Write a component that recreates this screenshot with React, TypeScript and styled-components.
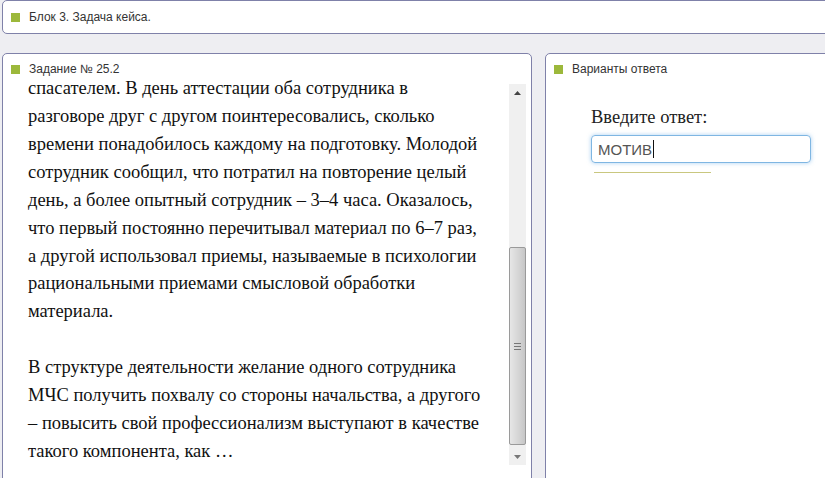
import { createGlobalStyle } from 'styled-components'
import styled from 'styled-components'

const GlobalStyle = createGlobalStyle`
  html, body {
    margin: 0;
    padding: 0;
    background: #eeeef2;
    overflow: hidden;
  }
`

const lines = [
  'спасателем. В день аттестации оба сотрудника в',
  'разговоре друг с другом поинтересовались, сколько',
  'времени понадобилось каждому на подготовку. Молодой',
  'сотрудник сообщил, что потратил на повторение целый',
  'день, а более опытный сотрудник – 3–4 часа. Оказалось,',
  'что первый постоянно перечитывал материал по 6–7 раз,',
  'а другой использовал приемы, называемые в психологии',
  'рациональными приемами смысловой обработки',
  'материала.',
  '',
  'В структуре деятельности желание одного сотрудника',
  'МЧС получить похвалу со стороны начальства, а другого',
  '– повысить свой профессионализм выступают в качестве',
  'такого компонента, как …'
]

const App = () => {
  return (
    <Page>
      <GlobalStyle />
      <TopPanel>
        <PanelTitle>
          <Marker />
          Блок 3. Задача кейса.
        </PanelTitle>
      </TopPanel>
      <Columns>
        <TaskPanel>
          <PanelTitle>
            <Marker />
            Задание № 25.2
          </PanelTitle>
          <TaskBody>
            <TaskText>
              {lines.map((line, i) => (
                <Line key={i}>{line || '\u00a0'}</Line>
              ))}
            </TaskText>
            <Scrollbar>
              <ScrollArrow>
                <svg width="7" height="4" viewBox="0 0 7 4">
                  <path d="M0 4 L3.5 0 L7 4 Z" fill="#444" />
                </svg>
              </ScrollArrow>
              <ScrollTrack>
                <ScrollThumb>
                  <Grip>
                    <span />
                    <span />
                    <span />
                  </Grip>
                </ScrollThumb>
              </ScrollTrack>
              <ScrollArrow>
                <svg width="7" height="4" viewBox="0 0 7 4">
                  <path d="M0 0 L7 0 L3.5 4 Z" fill="#777" />
                </svg>
              </ScrollArrow>
            </Scrollbar>
          </TaskBody>
        </TaskPanel>
        <AnswerPanel>
          <PanelTitle>
            <Marker />
            Варианты ответа
          </PanelTitle>
          <AnswerBody>
            <AnswerLabel>Введите ответ:</AnswerLabel>
            <AnswerInput>
              МОТИВ
              <Caret />
            </AnswerInput>
            <Underline />
          </AnswerBody>
        </AnswerPanel>
      </Columns>
    </Page>
  )
}

const Page = styled.div`
  width: 825px;
  height: 478px;
  overflow: hidden;
  padding-left: 2px;
  box-sizing: border-box;
  font-family: 'Liberation Sans', Arial, sans-serif;
`

const Panel = styled.div`
  background: #fff;
  border: 1px solid #7f81a9;
  border-radius: 5px;
  box-sizing: border-box;
`

const TopPanel = styled(Panel)`
  width: 840px;
  height: 34px;
  padding-top: 10px;
`

const Columns = styled.div`
  display: flex;
  gap: 13px;
  margin-top: 19px;
`

const TaskPanel = styled(Panel)`
  width: 530px;
  height: 440px;
  padding-top: 9px;
  flex-shrink: 0;
`

const AnswerPanel = styled(Panel)`
  width: 300px;
  height: 440px;
  padding-top: 9px;
  flex-shrink: 0;
`

const PanelTitle = styled.div`
  display: flex;
  align-items: center;
  gap: 9px;
  padding-left: 8px;
  font-size: 12px;
  line-height: 12px;
  color: #333;
`

const Marker = styled.span`
  width: 9px;
  height: 9px;
  background: #9cb83b;
  flex-shrink: 0;
`

const TaskBody = styled.div`
  display: flex;
  margin-top: 0;
`

const TaskText = styled.div`
  width: 481px;
  padding-left: 25px;
  font-family: 'Liberation Serif', 'Times New Roman', serif;
  font-size: 18.5px;
  line-height: 27.92px;
  color: #111;
`

const Line = styled.div`
  white-space: nowrap;
`

const Scrollbar = styled.div`
  display: flex;
  flex-direction: column;
  width: 17px;
  height: 381px;
  margin-top: 9px;
  background: #f0f0f0;
`

const ScrollArrow = styled.div`
  height: 17px;
  display: flex;
  align-items: center;
  justify-content: center;
  background: #f0f0f0;
`

const ScrollTrack = styled.div`
  flex: 1;
  display: flex;
  flex-direction: column;
  justify-content: flex-end;
  padding-bottom: 3px;
`

const ScrollThumb = styled.div`
  height: 198px;
  border: 1px solid #9a9a9a;
  border-radius: 2px;
  background: linear-gradient(to right, #e6e6e6, #d4d4d4 60%, #c6c6c6);
  display: flex;
  align-items: center;
  justify-content: center;
  box-sizing: border-box;
`

const Grip = styled.div`
  display: flex;
  flex-direction: column;
  gap: 2px;

  span {
    display: block;
    width: 7px;
    height: 1px;
    background: #777;
  }
`

const AnswerBody = styled.div`
  display: flex;
  flex-direction: column;
  padding-left: 45px;
  margin-top: 32px;
`

const AnswerLabel = styled.div`
  font-family: 'Liberation Serif', 'Times New Roman', serif;
  font-size: 18.5px;
  line-height: 20px;
  color: #222;
`

const AnswerInput = styled.div`
  display: flex;
  align-items: center;
  margin-top: 8px;
  width: 220px;
  height: 28px;
  box-sizing: border-box;
  padding-left: 6px;
  border: 1px solid #7fb6e2;
  border-radius: 4px;
  box-shadow: 0 0 4px rgba(100, 170, 230, 0.55);
  font-size: 15px;
  color: #555;
`

const Caret = styled.span`
  width: 1px;
  height: 18px;
  background: #111;
  margin-left: 1px;
`

const Underline = styled.div`
  width: 117px;
  height: 1px;
  margin-top: 9px;
  margin-left: 3px;
  background: #c9c77f;
`

export default App
